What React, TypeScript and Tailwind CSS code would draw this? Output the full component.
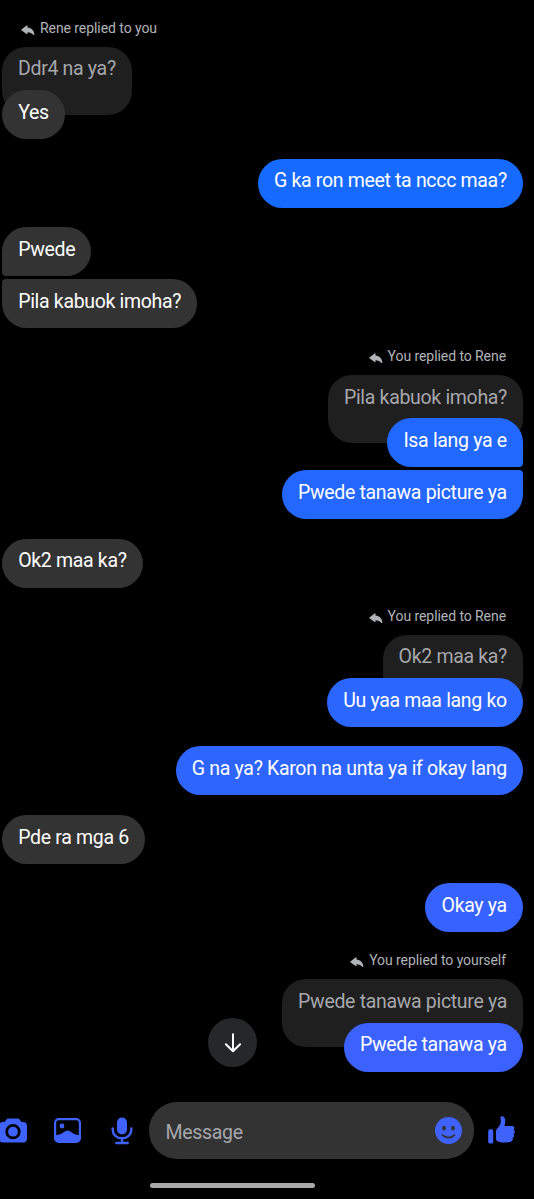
import clsx from 'clsx'

interface ChatMessage {
  id: number
  text: string
  mine?: boolean
  color?: string
  replyLabel?: string
  quoted?: string
  joinTop?: boolean
  joinBottom?: boolean
}

const MESSAGES: ChatMessage[] = [
  { id: 1, text: 'Yes', replyLabel: 'Rene replied to you', quoted: 'Ddr4 na ya?' },
  { id: 2, text: 'G ka ron meet ta nccc maa?', mine: true, color: 'bg-[#176aff]' },
  { id: 3, text: 'Pwede', joinBottom: true },
  { id: 4, text: 'Pila kabuok imoha?', joinTop: true },
  {
    id: 5,
    text: 'Isa lang ya e',
    mine: true,
    color: 'bg-[#2168ff]',
    replyLabel: 'You replied to Rene',
    quoted: 'Pila kabuok imoha?',
    joinBottom: true,
  },
  { id: 6, text: 'Pwede tanawa picture ya', mine: true, color: 'bg-[#2467ff]', joinTop: true },
  { id: 7, text: 'Ok2 maa ka?' },
  {
    id: 8,
    text: 'Uu yaa maa lang ko',
    mine: true,
    color: 'bg-[#2b66ff]',
    replyLabel: 'You replied to Rene',
    quoted: 'Ok2 maa ka?',
  },
  { id: 9, text: 'G na ya? Karon na unta ya if okay lang', mine: true, color: 'bg-[#2f65ff]' },
  { id: 10, text: 'Pde ra mga 6' },
  { id: 11, text: 'Okay ya', mine: true, color: 'bg-[#3663ff]' },
  {
    id: 12,
    text: 'Pwede tanawa ya',
    mine: true,
    color: 'bg-[#3b62ff]',
    replyLabel: 'You replied to yourself',
    quoted: 'Pwede tanawa picture ya',
  },
]

function ReplyIcon() {
  return (
    <svg viewBox="0 0 14 11" className="mt-[7px] h-[11px] w-[14px]" fill="currentColor">
      <path d="M0.4 4.4 5.6 0.4C6.1 0 6.5 0.2 6.5 0.8V2.4C10.4 2.8 13.2 5.4 13.4 9.5C13.4 10.2 12.8 10.3 12.3 9.8C10.8 8.1 9 7.3 6.5 7.2V8.6C6.5 9.2 6.1 9.4 5.6 9L0.4 5.2C0.1 5 0.1 4.6 0.4 4.4Z" />
    </svg>
  )
}

function MessageRow({ message }: { message: ChatMessage }) {
  const { text, mine, color, replyLabel, quoted, joinTop, joinBottom } = message

  return (
    <div
      className={clsx(
        'flex flex-col',
        mine ? 'items-end' : 'items-start',
        joinTop ? 'mt-[3px]' : replyLabel ? 'mt-[17.8px]' : 'mt-[19.4px]'
      )}
    >
      {replyLabel && (
        <div className="flex h-[29px] items-start gap-[5px] pr-[17px] pl-[19px] text-[14px] leading-[20px] tracking-[-0.07px] text-[#b0b3b8]">
          <ReplyIcon />
          <span className="whitespace-nowrap">{replyLabel}</span>
        </div>
      )}
      {quoted && (
        <div className="h-[68px] rounded-[24px] bg-[#1f1f1f] px-[16px] pt-[10.7px] leading-6 whitespace-nowrap text-[#a6a7ab]">
          {quoted}
        </div>
      )}
      <div
        className={clsx(
          'relative h-[49px] rounded-[24.5px] px-[16.2px] pt-[10.7px] leading-6 whitespace-nowrap text-white',
          mine ? color : 'bg-[#333334]',
          quoted && '-mt-[24.5px]',
          joinTop && (mine ? 'rounded-tr-[4px]' : 'rounded-tl-[4px]'),
          joinBottom && (mine ? 'rounded-br-[4px]' : 'rounded-bl-[4px]')
        )}
      >
        {text}
      </div>
    </div>
  )
}

function CameraIcon() {
  return (
    <svg viewBox="0 0 28 25" className="h-[25px] w-[28px] shrink-0" fill="currentColor">
      <path
        fillRule="evenodd"
        d="M9.5 0.5h9c1 0 1.7 0.4 2.3 1.2l1.2 1.7c0.3 0.4 0.7 0.6 1.2 0.6h0.8c2.4 0 4 1.6 4 4v12.5c0 2.4-1.6 4-4 4H4c-2.4 0-4-1.6-4-4V8c0-2.4 1.6-4 4-4h0.8c0.5 0 0.9-0.2 1.2-0.6l1.2-1.7C7.8 0.9 8.5 0.5 9.5 0.5ZM14 6.1a7.6 7.6 0 1 0 0 15.2a7.6 7.6 0 0 0 0-15.2Z"
      />
      <circle cx="14" cy="13.7" r="4.9" />
    </svg>
  )
}

function PhotoIcon() {
  return (
    <svg viewBox="0 0 27 25" className="h-[25px] w-[27px] shrink-0" fill="currentColor">
      <rect x="1.1" y="1.1" width="24.8" height="22.8" rx="3.6" fill="none" stroke="currentColor" strokeWidth="2.2" />
      <circle cx="8" cy="8" r="2.4" />
      <path d="M1 17.3c3.2-0.3 5.2-1.1 7.4-2.4l3.1-1.9c1.2-0.7 2.8-0.7 4 0l3.1 1.9c2.2 1.3 4.2 2.1 7.4 2.4V21a3 3 0 0 1-3 3H4a3 3 0 0 1-3-3Z" />
    </svg>
  )
}

function MicIcon() {
  return (
    <svg viewBox="0 0 22 28" className="h-[28px] w-[22px] shrink-0">
      <rect x="6" y="0.5" width="10" height="17" rx="5" fill="currentColor" />
      <path
        d="M1.7 11.5v1.3a9.3 8.5 0 0 0 18.6 0v-1.3M11 21.5v4M5.3 26h11.4"
        fill="none"
        stroke="currentColor"
        strokeWidth="2.4"
        strokeLinecap="round"
      />
    </svg>
  )
}

function SmileyIcon() {
  return (
    <svg viewBox="0 0 27 27" className="h-[27px] w-[27px] shrink-0">
      <circle cx="13.5" cy="13.5" r="13.5" fill="currentColor" />
      <g fill="#333334">
        <ellipse cx="9" cy="11.2" rx="1.9" ry="2.4" />
        <ellipse cx="18" cy="11.2" rx="1.9" ry="2.4" />
      </g>
      <path d="M7.6 18.2c3.2 3.2 8.6 3.2 11.8 0" fill="none" stroke="#333334" strokeWidth="1.9" strokeLinecap="round" />
    </svg>
  )
}

function ThumbIcon() {
  return (
    <svg viewBox="0 0 27 28" className="h-[28px] w-[27px] shrink-0" fill="currentColor">
      <rect x="0.2" y="13.3" width="5" height="14.3" rx="1.7" />
      <path d="M12.5 1.4c0-0.8 0.5-1.2 1.3-1.2c2.2 0 3.5 1.9 3.5 4.5c0 2-0.3 3.8-0.9 5.4h7.7c1.4 0 2.3 0.9 2.3 2.1c0 0.8-0.4 1.4-0.9 1.8c0.9 0.4 1.4 1.1 1.4 2c0 1-0.6 1.8-1.5 2.1c0.5 0.4 0.7 0.9 0.7 1.6c0 1.1-0.7 1.9-1.7 2.1c0.3 0.4 0.5 0.8 0.5 1.3c0 1.9-2.2 3.5-6.6 3.5c-3.4 0-6.2-0.2-8.4-1.2c-1.2-0.5-1.9-1.3-1.9-2.6v-7.2c0-1.6 0.5-2.6 1.7-3.7c2.4-2.3 3.3-4.6 3.1-7.4Z" />
    </svg>
  )
}

function Composer() {
  return (
    <div className="flex h-[57px] items-center text-[#3e62fb]">
      <div className="-ml-px flex h-[57px] w-[150px] items-center">
        <CameraIcon />
        <div className="ml-[27px] flex">
          <PhotoIcon />
        </div>
        <div className="ml-[30px] flex">
          <MicIcon />
        </div>
      </div>
      <div className="flex h-[57px] w-[325px] items-center justify-between rounded-[28px] bg-[#333334] pr-[12px] pl-[16.5px]">
        <span className="pt-[4px] text-[#a6a7ab]">Message</span>
        <SmileyIcon />
      </div>
      <div className="-mt-[2px] ml-[13.5px] flex">
        <ThumbIcon />
      </div>
    </div>
  )
}

export default function App() {
  return (
    <div className="relative flex h-[1199px] w-[534px] flex-col overflow-hidden bg-black font-['Roboto',sans-serif] text-[19.5px] tracking-[-0.32px]">
      <div className="flex h-[1102px] flex-col pr-[11px] pl-[2px]">
        {MESSAGES.map((message) => (
          <MessageRow key={message.id} message={message} />
        ))}
      </div>
      <button className="absolute top-[1018px] left-[208px] flex h-[49px] w-[49px] items-center justify-center rounded-full bg-[#262728] text-white">
        <svg viewBox="0 0 18 20" className="h-[20px] w-[18px]" fill="none" stroke="currentColor" strokeWidth="2" strokeLinecap="round" strokeLinejoin="round">
          <path d="M9 1.2v17M1.9 11.2 9 18.2l7.1-7" />
        </svg>
      </button>
      <Composer />
      <div className="mt-[24px] ml-[150px] h-[5px] w-[165px] rounded-full bg-[#a8a8a8]" />
    </div>
  )
}
